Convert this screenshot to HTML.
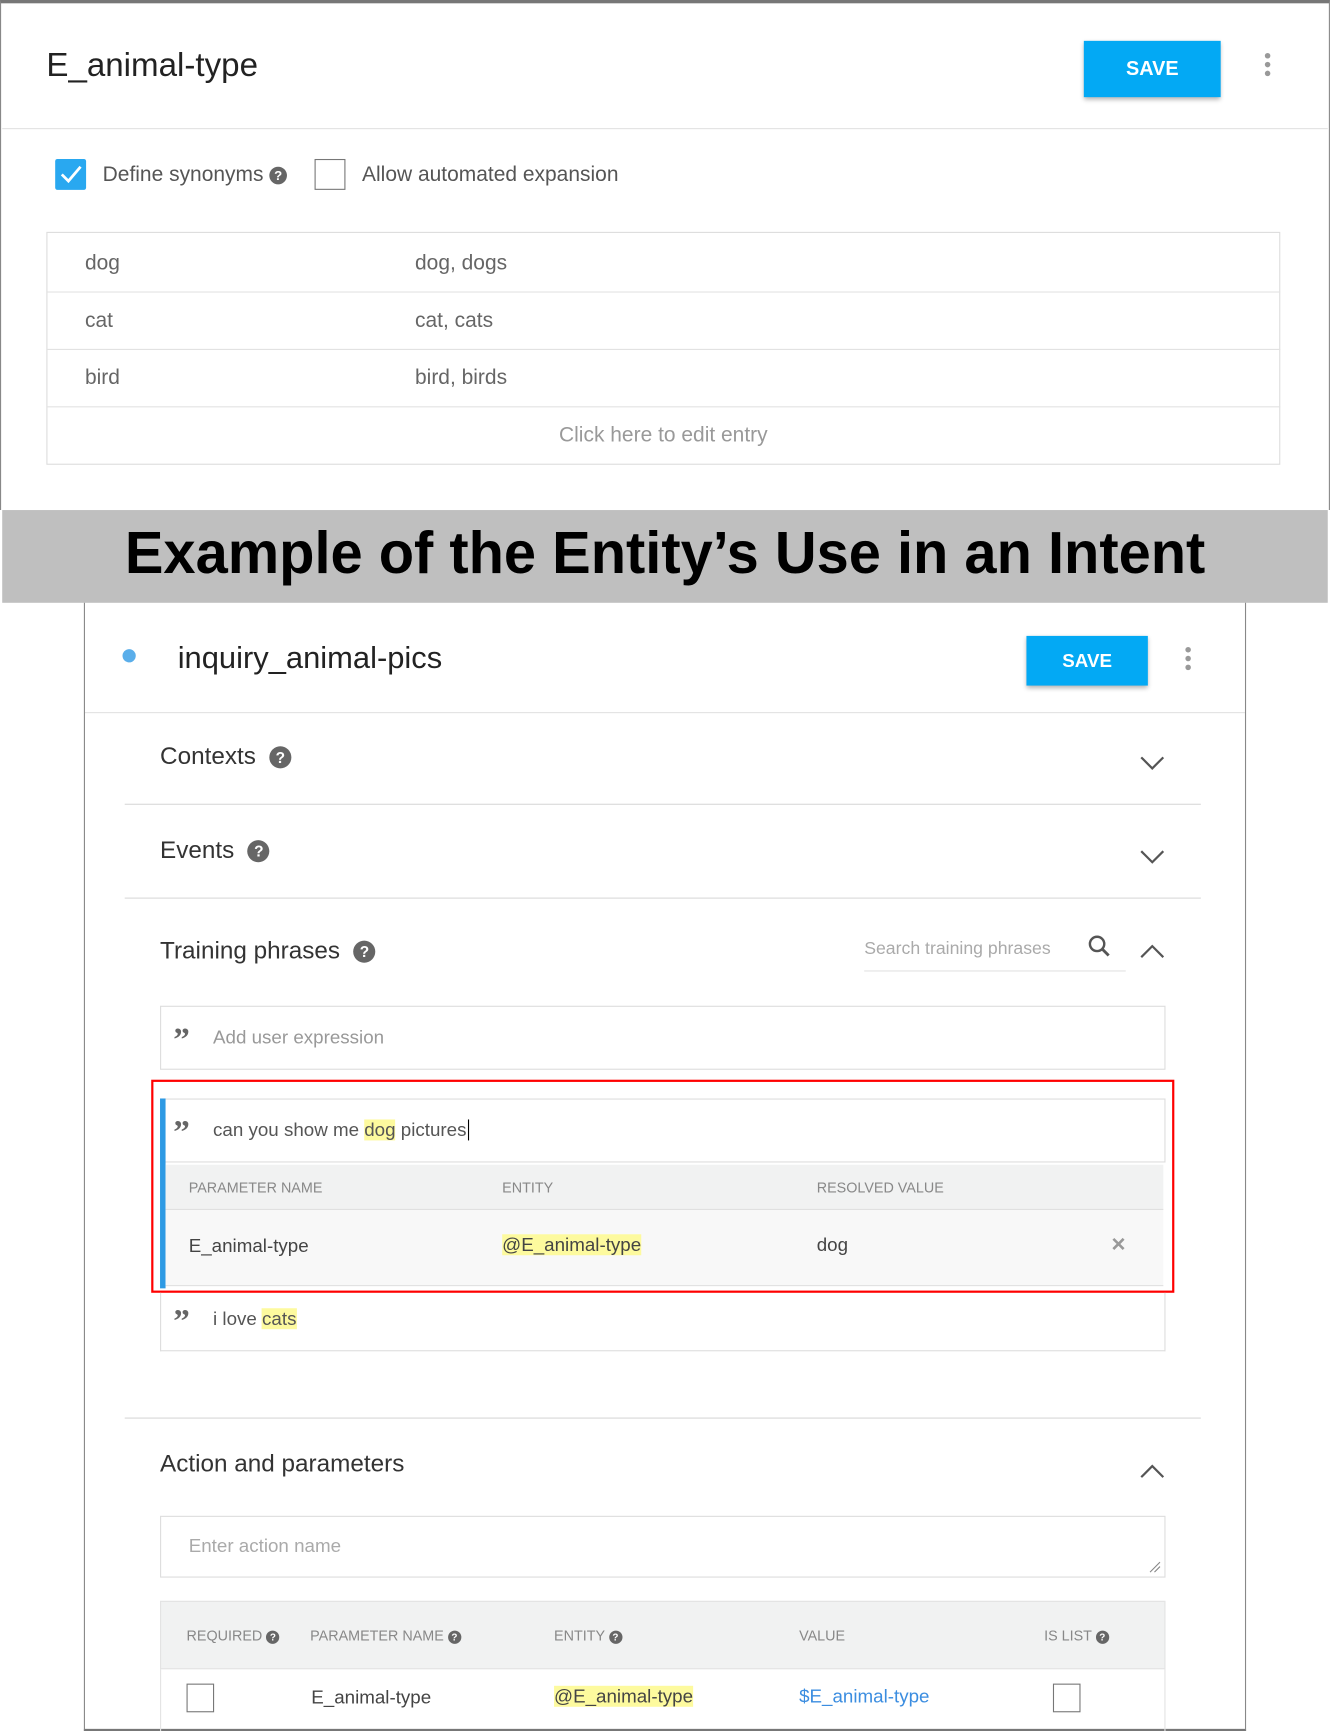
<!DOCTYPE html>
<html><head><meta charset="utf-8"><style>
*{margin:0;padding:0;box-sizing:border-box}
html,body{width:1330px;height:1731px;overflow:hidden;background:#fff}
#w{position:absolute;left:0;top:0;width:1205px;height:1568px;transform:scale(1.1037,1.104);transform-origin:0 0;font-family:"Liberation Sans",sans-serif}
.a{position:absolute;white-space:nowrap}
.line{position:absolute;background:#e2e2e2;height:1px}
.btn{position:absolute;background:#03a9f4;color:#fff;font-weight:bold;display:flex;align-items:center;justify-content:center;box-shadow:0 2px 4px rgba(0,0,0,.3)}
.dots{position:absolute;width:5px}
.dots i{display:block;width:5px;height:5px;border-radius:50%;background:#999;margin-bottom:3px}
.help{display:inline-block;border-radius:50%;background:#666;color:#fff;font-weight:bold;text-align:center;vertical-align:middle}
.hl{background:#fdfa9e}
.box{position:absolute;border:1px solid #ddd;background:#fff}
.q{position:absolute;font-weight:bold;color:#666;font-size:30px;line-height:30px;font-family:"Liberation Serif",serif}
.cb{position:absolute;border:1.5px solid #777;background:#fff}
.hd{font-size:13px;color:#888}
</style></head><body><div id="w">
<div class="a" style="left:0;top:0;width:1205px;height:462px;border:1.5px solid #888;border-top:3px solid #777;border-bottom:none"></div>
<div class="a" style="left:42px;top:43px;font-size:30px;color:#222">E_animal-type</div>
<div class="btn" style="left:982px;top:37px;width:124px;height:51px;font-size:18px">SAVE</div>
<div class="dots" style="left:1146px;top:48px"><i></i><i></i><i></i></div>
<div class="line" style="left:2px;top:116px;width:1201px"></div>
<div class="a" style="left:50px;top:144px;width:28px;height:28px;background:#29a8f0;border-radius:2px"><svg width="28" height="28"><path d="M6 14l6 6 11-13" stroke="#fff" stroke-width="2.5" fill="none"/></svg></div>
<div class="a" style="left:93px;top:148px;font-size:19px;color:#555">Define synonyms <span class="help" style="width:16px;height:16px;font-size:12px;line-height:16px">?</span></div>
<div class="cb" style="left:285px;top:144px;width:28px;height:28px"></div>
<div class="a" style="left:328px;top:148px;font-size:19px;color:#555">Allow automated expansion</div>
<div class="box" style="left:42px;top:210px;width:1118px;height:211px;border-color:#ddd"></div>
<div class="line" style="left:42px;top:264px;width:1118px"></div>
<div class="line" style="left:42px;top:316px;width:1118px"></div>
<div class="line" style="left:42px;top:368px;width:1118px"></div>
<div class="a" style="left:77px;top:228px;font-size:19px;color:#666">dog</div>
<div class="a" style="left:376px;top:228px;font-size:19px;color:#666">dog, dogs</div>
<div class="a" style="left:77px;top:280px;font-size:19px;color:#666">cat</div>
<div class="a" style="left:376px;top:280px;font-size:19px;color:#666">cat, cats</div>
<div class="a" style="left:77px;top:332px;font-size:19px;color:#666">bird</div>
<div class="a" style="left:376px;top:332px;font-size:19px;color:#666">bird, birds</div>
<div class="a" style="left:42px;width:1118px;top:384px;text-align:center;font-size:19px;color:#999">Click here to edit entry</div>
<div class="a" style="left:2px;top:462px;width:1201px;height:84px;background:#bfbfbf"></div>
<div class="a" style="left:2px;top:470px;width:1201px;text-align:center"><span style="display:inline-block;font-size:54px;font-weight:bold;color:#000;transform:scaleX(0.97)">Example of the Entity’s Use in an Intent</span></div>
<div class="a" style="left:76px;top:546px;width:1053px;height:1022px;border:1.5px solid #888;border-top:none;border-bottom:2px solid #777"></div>
<div class="a" style="left:111px;top:588px;width:12px;height:12px;border-radius:50%;background:#5aaeea"></div>
<div class="a" style="left:161px;top:580px;font-size:28px;color:#222">inquiry_animal-pics</div>
<div class="btn" style="left:930px;top:576px;width:110px;height:45px;font-size:17px">SAVE</div>
<div class="dots" style="left:1074px;top:586px"><i></i><i></i><i></i></div>
<div class="line" style="left:77px;top:645px;width:1051px"></div>
<div class="a" style="left:145px;top:672px;font-size:22px;color:#333">Contexts &nbsp;<span class="help" style="width:20px;height:20px;font-size:14px;line-height:20px">?</span></div>
<svg class="a" style="left:1032px;top:683px" width="24" height="16"><path d="M2 3l10 10 10-10" stroke="#555" stroke-width="2" fill="none"/></svg>
<div class="line" style="left:113px;top:728px;width:975px;background:#d8d8d8"></div>
<div class="a" style="left:145px;top:757px;font-size:22px;color:#333">Events &nbsp;<span class="help" style="width:20px;height:20px;font-size:14px;line-height:20px">?</span></div>
<svg class="a" style="left:1032px;top:768px" width="24" height="16"><path d="M2 3l10 10 10-10" stroke="#555" stroke-width="2" fill="none"/></svg>
<div class="line" style="left:113px;top:813px;width:975px;background:#d8d8d8"></div>
<div class="a" style="left:145px;top:848px;font-size:22px;color:#333">Training phrases &nbsp;<span class="help" style="width:20px;height:20px;font-size:14px;line-height:20px">?</span></div>
<div class="a" style="left:783px;top:851px;font-size:16px;color:#aaa">Search training phrases</div>
<div class="line" style="left:783px;top:879px;width:237px"></div>
<svg class="a" style="left:985px;top:846px" width="22" height="22"><circle cx="9" cy="9" r="6.5" stroke="#555" stroke-width="2.2" fill="none"/><path d="M13.5 13.5l6 6" stroke="#555" stroke-width="2.6"/></svg>
<svg class="a" style="left:1032px;top:854px" width="24" height="16"><path d="M2 13l10-10 10 10" stroke="#555" stroke-width="2" fill="none"/></svg>
<div class="box" style="left:145px;top:911px;width:911px;height:58px"></div>
<div class="q" style="left:157px;top:927px">”</div>
<div class="a" style="left:193px;top:930px;font-size:17px;color:#999">Add user expression</div>
<div class="box" style="left:145px;top:995px;width:911px;height:58px"></div>
<div class="a" style="left:145px;top:995px;width:5px;height:172px;background:#2e9ae4"></div>
<div class="q" style="left:157px;top:1011px">”</div>
<div class="a" style="left:193px;top:1014px;font-size:17px;color:#555">can you show me <span class="hl">dog</span> pictures<span style="border-left:1px solid #000;margin-left:1px"></span></div>
<div class="a" style="left:150px;top:1055px;width:904px;height:41px;background:#f1f2f2;border-bottom:1px solid #e0e0e0"></div>
<div class="a hd" style="left:171px;top:1068px">PARAMETER NAME</div>
<div class="a hd" style="left:455px;top:1068px">ENTITY</div>
<div class="a hd" style="left:740px;top:1068px">RESOLVED VALUE</div>
<div class="a" style="left:150px;top:1096px;width:904px;height:69px;background:#f8f8f8;border-bottom:1px solid #e0e0e0"></div>
<div class="a" style="left:171px;top:1119px;font-size:17px;color:#444">E_animal-type</div>
<div class="a" style="left:455px;top:1118px;font-size:17px;color:#444"><span class="hl">@E_animal-type</span></div>
<div class="a" style="left:740px;top:1118px;font-size:17px;color:#444">dog</div>
<div class="a" style="left:1007px;top:1114px;font-size:22px;color:#999;font-weight:bold">×</div>
<div class="a" style="left:137px;top:978px;width:927px;height:193px;border:2px solid #f00"></div>
<div class="a" style="left:145px;top:1171px;width:911px;height:53px;border:1px solid #ddd;border-top:none"></div>
<div class="q" style="left:157px;top:1182px">”</div>
<div class="a" style="left:193px;top:1185px;font-size:17px;color:#555">i love <span class="hl">cats</span></div>
<div class="line" style="left:113px;top:1284px;width:975px;background:#d8d8d8"></div>
<div class="a" style="left:145px;top:1313px;font-size:22px;color:#333">Action and parameters</div>
<svg class="a" style="left:1032px;top:1325px" width="24" height="16"><path d="M2 13l10-10 10 10" stroke="#555" stroke-width="2" fill="none"/></svg>
<div class="box" style="left:145px;top:1373px;width:911px;height:56px"></div>
<div class="a" style="left:171px;top:1391px;font-size:17px;color:#aaa">Enter action name</div>
<svg class="a" style="left:1040px;top:1413px" width="12" height="12"><path d="M2 11L11 2M6 11l5-5" stroke="#888" stroke-width="1"/></svg>
<div class="a" style="left:145px;top:1450px;width:911px;height:62px;background:#f1f2f2;border:1px solid #e3e3e3"></div>
<div class="a hd" style="left:169px;top:1474px">REQUIRED <span class="help" style="width:12px;height:12px;font-size:9px;line-height:12px">?</span></div>
<div class="a hd" style="left:281px;top:1474px">PARAMETER NAME <span class="help" style="width:12px;height:12px;font-size:9px;line-height:12px">?</span></div>
<div class="a hd" style="left:502px;top:1474px">ENTITY <span class="help" style="width:12px;height:12px;font-size:9px;line-height:12px">?</span></div>
<div class="a hd" style="left:724px;top:1474px">VALUE</div>
<div class="a hd" style="left:946px;top:1474px">IS LIST <span class="help" style="width:12px;height:12px;font-size:9px;line-height:12px">?</span></div>
<div class="a" style="left:145px;top:1512px;width:911px;height:56px;border-left:1px solid #e3e3e3;border-right:1px solid #e3e3e3"></div>
<div class="cb" style="left:169px;top:1525px;width:25px;height:26px"></div>
<div class="a" style="left:282px;top:1528px;font-size:17px;color:#444">E_animal-type</div>
<div class="a" style="left:502px;top:1527px;font-size:17px;color:#444"><span class="hl">@E_animal-type</span></div>
<div class="a" style="left:724px;top:1527px;font-size:17px;color:#3b8de0">$E_animal-type</div>
<div class="cb" style="left:954px;top:1525px;width:25px;height:26px"></div>
</div></body></html>
